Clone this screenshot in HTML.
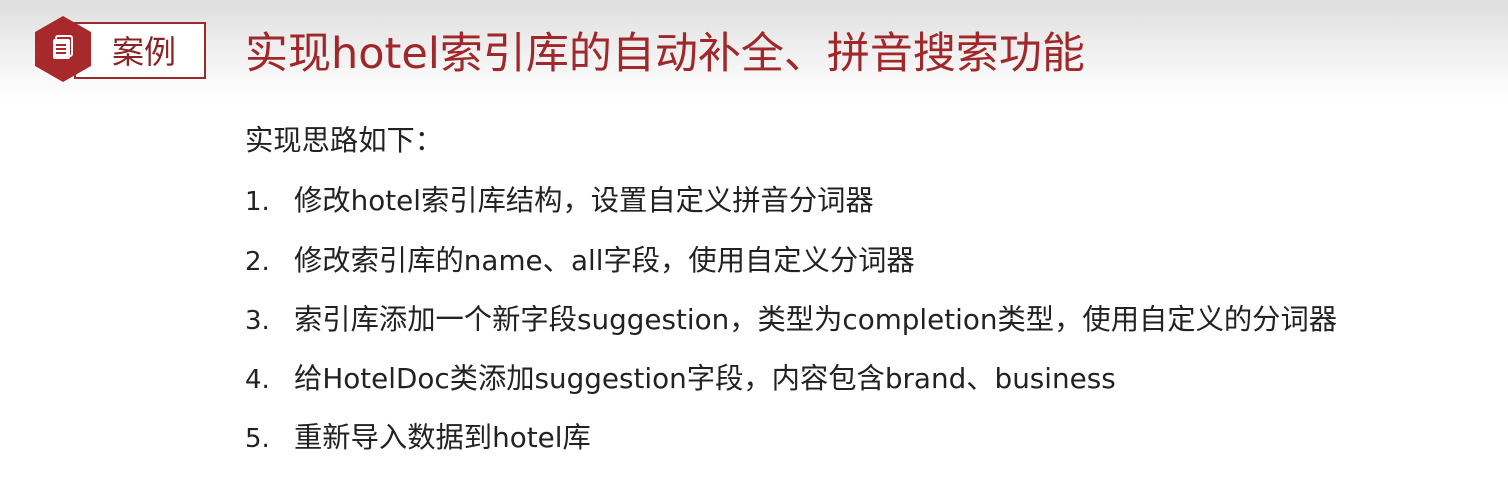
<!DOCTYPE html>
<html><head><meta charset="utf-8"><style>
body{margin:0;width:1508px;height:477px;background:#fff;position:relative;overflow:hidden;font-family:"Noto Sans CJK SC",sans-serif;}
.hdr{position:absolute;left:0;top:0;width:1508px;height:100px;background:linear-gradient(#dedede,#f3f3f3 60%,#fff);}
.box{position:absolute;left:74px;top:22px;width:128px;height:53px;border:2px solid #9b2a2a;background:#fff;}
.box span{position:absolute;left:36px;top:2px;font-size:32px;line-height:48px;color:#8a2424;}
.hex{position:absolute;left:34px;top:16px;}
.title{position:absolute;left:245px;top:24px;font-size:43px;line-height:60px;color:#a0282a;white-space:nowrap;font-family:"DejaVu Sans","Noto Sans CJK SC",sans-serif;}
.l{position:absolute;left:245px;font-size:28.3px;line-height:36px;color:#222;white-space:nowrap;}
.l b{font-weight:normal;display:inline-block;width:49px;font-family:"DejaVu Sans",sans-serif;font-size:26px;}
.e{font-family:"DejaVu Sans",sans-serif;font-size:27.8px;}
</style></head><body>
<div class="hdr"></div>
<div class="box"><span>案例</span></div>
<svg class="hex" width="58" height="66" viewBox="0 0 58 66"><polygon points="29,0 57,16 57,50 29,66 1,50 1,16" fill="#a8292b"/>
<rect x="19" y="23" width="17" height="20" rx="2" fill="#fff"/><rect x="22" y="20" width="16" height="20" rx="2" fill="none" stroke="#fff" stroke-width="2"/>
<line x1="22" y1="29" x2="32" y2="29" stroke="#a8292b" stroke-width="2"/><line x1="22" y1="33" x2="32" y2="33" stroke="#a8292b" stroke-width="2"/><line x1="22" y1="37" x2="32" y2="37" stroke="#a8292b" stroke-width="2"/></svg>
<div class="title">实现hotel索引库的自动补全、拼音搜索功能</div>
<div class="l" style="top:121px">实现思路如下：</div>
<div class="l" style="top:181px"><b>1.</b>修改<span class="e">hotel</span>索引库结构，设置自定义拼音分词器</div>
<div class="l" style="top:241px"><b>2.</b>修改索引库的<span class="e">name</span>、<span class="e">all</span>字段，使用自定义分词器</div>
<div class="l" style="top:300px"><b>3.</b>索引库添加一个新字段<span class="e">suggestion</span>，类型为<span class="e">completion</span>类型，使用自定义的分词器</div>
<div class="l" style="top:359px"><b>4.</b>给<span class="e">HotelDoc</span>类添加<span class="e">suggestion</span>字段，内容包含<span class="e">brand</span>、<span class="e">business</span></div>
<div class="l" style="top:418px"><b>5.</b>重新导入数据到<span class="e">hotel</span>库</div>
</body></html>
